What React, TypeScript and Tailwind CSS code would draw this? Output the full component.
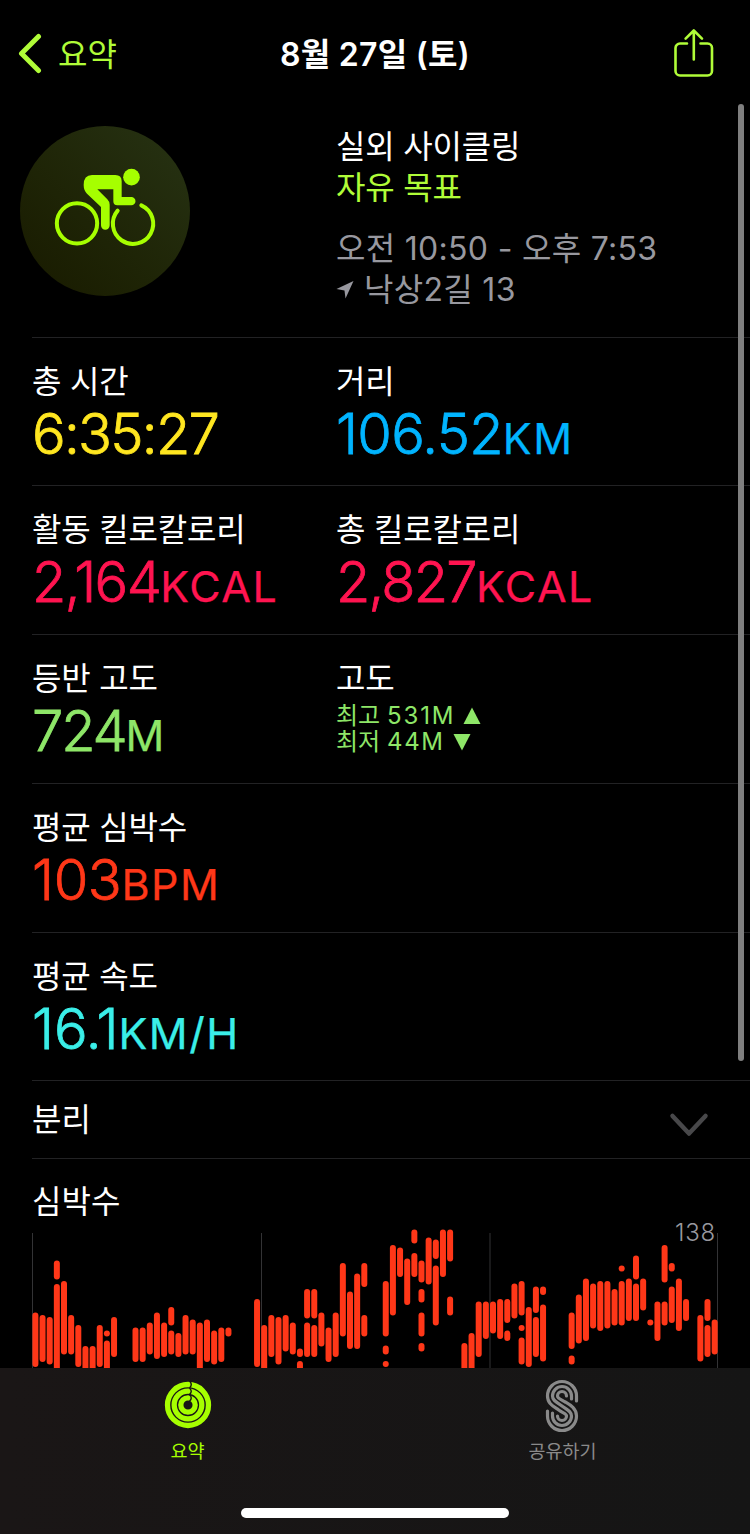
import type { ReactNode } from "react";
import clsx from "clsx";

// [slot, top, bottom] - one slot is a few minutes of the workout
const heartRate: [number, number, number][] = [
  [0, 92.5, 147], [1, 95, 142], [2, 97, 144.5], [3, 40.5, 59.5], [3, 64, 160],
  [4, 61, 134.5], [5, 95, 134.5], [6, 105, 147], [7, 126, 160], [8, 126, 160],
  [9, 105, 147], [10, 110.5, 116.5], [10, 120.5, 160], [11, 97, 137],
  [14, 107.5, 142], [15, 107.5, 142], [16, 102.5, 134.5], [17, 92.5, 139],
  [18, 102.5, 137], [19, 87, 105.5], [19, 110.5, 134.5], [20, 113, 137],
  [21, 95, 134.5], [22, 99.5, 134.5], [23, 102.5, 160], [24, 99.5, 142],
  [25, 110.5, 144.5], [26, 107.5, 142], [27, 107.5, 116.5],
  [31, 79, 147], [32, 105, 160], [33, 95, 137], [34, 97, 144.5],
  [35, 95, 131.5], [36, 102.5, 134.5], [37, 128.5, 137], [37, 141, 160],
  [38, 69, 98.5], [38, 102.5, 137], [39, 69, 98.5], [39, 105, 137],
  [40, 92.5, 126.5], [41, 107.5, 142], [42, 92.5, 137], [43, 43, 116.5],
  [44, 71.5, 129], [45, 53.5, 129], [46, 43, 67], [46, 95, 116.5],
  [49, 61, 116.5], [49, 125.5, 134.5], [49, 141, 147], [50, 25, 95.5],
  [51, 27.5, 57], [52, 38.5, 85], [53, 9.5, 23.5], [53, 33, 57],
  [54, 40.5, 62.5], [54, 69, 82.5], [54, 92.5, 116.5], [54, 123, 131.5],
  [55, 17.5, 64.5], [56, 19.5, 39], [56, 45.5, 105.5], [57, 9.5, 57],
  [58, 9.5, 41.5], [58, 76.5, 95.5],
  [60, 123, 160], [61, 113, 160], [62, 81.5, 137], [63, 81.5, 119],
  [64, 81.5, 113.5], [65, 79, 119], [66, 79, 103], [66, 110.5, 121],
  [67, 63.5, 98.5], [68, 61, 95.5], [68, 105, 111], [68, 117.5, 144.5],
  [69, 87, 147], [70, 66.5, 93], [70, 97, 137], [71, 66.5, 75], [71, 84.5, 141.5],
  [75, 92.5, 129], [75, 135.5, 144.5], [76, 74.5, 123.5], [77, 58.5, 121],
  [78, 63.5, 108.5], [79, 61, 111], [80, 61, 108.5], [81, 69, 105.5],
  [82, 45.5, 51.5], [82, 61, 105.5], [83, 58.5, 101], [84, 35.5, 59.5],
  [84, 63.5, 101], [85, 58.5, 90.5], [86, 99.5, 105.5], [87, 81.5, 121],
  [88, 25, 62.5], [88, 81.5, 105.5], [89, 43, 51.5], [89, 66.5, 103],
  [90, 58.5, 111], [91, 79, 101],
  [93, 95, 141.5], [94, 79, 101], [94, 105, 137], [95, 99.5, 134.5],
];

const CyclingIcon = () => (
  <svg viewBox="30 48 510 510" className="h-[170px] w-[170px]" fill="none">
    <circle cx="201" cy="340" r="60.5" stroke="#a6ff00" strokeWidth="12" />
    <path
      d="M323 302A60.5 60.5 0 1 0 394 286"
      stroke="#a6ff00"
      strokeWidth="12"
      strokeLinecap="round"
    />
    <circle cx="364.5" cy="201.5" r="25" fill="#a6ff00" />
    <path
      fill="#a6ff00"
      d="M246 195H316Q335 195 335 214V261H364a12.5 12.5 0 0 1 0 25H322Q310 286 310 274V238H262L292 268Q299 275 299 284V346a13 13 0 0 1-26 0V291L231 251Q221 241 221 225Q221 195 246 195Z"
    />
  </svg>
);

const ShareIcon = () => (
  <svg
    viewBox="0 0 42 52"
    className="h-[52px] w-[42px]"
    fill="none"
    stroke="#b0fc38"
    strokeWidth="2.6"
    strokeLinecap="round"
    strokeLinejoin="round"
  >
    <path d="M14 16.500H7a4.500 4.500 0 0 0-4.500 4.500V44a4.500 4.500 0 0 0 4.500 4.500H34.500a4.500 4.500 0 0 0 4.500-4.500V21a4.500 4.500 0 0 0-4.500-4.500H27.500" />
    <path d="M20.800 32.500V3.500M12.600 11.700l8.200-8.200 8.200 8.200" />
  </svg>
);

const RingsIcon = () => (
  <svg viewBox="0 0 48 48" className="h-12 w-12" fill="none">
    <g stroke="#a6ff00" strokeWidth="5.3">
      <circle cx="24" cy="24" r="20.5" />
      <circle cx="24" cy="24" r="13.8" />
      <circle cx="24" cy="24" r="7.2" />
    </g>
    <g stroke="#161414" strokeWidth="1.4">
      <path d="M25.500 0q3.500 3.500 0 7M25.500 7q3.500 3.300 0 6.600M25.500 13.600q3.500 3.300 0 6.600" />
    </g>
  </svg>
);

const SharingIcon = () => (
  <svg
    viewBox="0 0 34 54"
    className="h-[54px] w-[34px]"
    fill="none"
    stroke="#8a8a8a"
    strokeWidth="3.2"
    strokeLinecap="round"
  >
    <path d="M31.500 22V17A14.500 14.500 0 0 0 2.500 17C2.500 25 9 27.500 13.700 31S21.500 34.500 21.500 37A4.500 4.500 0 0 1 12.500 37" />
    <path d="M26.500 20V17A9.500 9.500 0 0 0 7.500 17C7.500 22 12.500 23.500 17 27S26.500 32 26.500 37A9.500 9.500 0 0 1 7.500 37V34" />
    <path d="M21.500 17A4.500 4.500 0 0 0 12.500 17C12.500 19.500 16 20.500 20.300 23S31.500 29 31.500 37A14.500 14.500 0 0 1 2.500 37V32" />
  </svg>
);

type MetricProps = {
  label: string;
  value?: string;
  unit?: string;
  className?: string;
  children?: ReactNode;
};

const Metric = ({ label, value, unit, className, children }: MetricProps) => (
  <div className="w-[304px] shrink-0 whitespace-nowrap pt-[24px]">
    <div className="h-[38px] text-[32px] leading-10 tracking-[-0.2px]">{label}</div>
    {value ? (
      <div
        className={clsx(
          "h-[68px] text-[56px] font-light leading-[68px] [-webkit-text-stroke:0.8px_currentColor]",
          className
        )}
      >
        {value}
        <span className="text-[43px] font-normal tracking-[1.5px] [-webkit-text-stroke:0.25px_currentColor]">
          {unit}
        </span>
      </div>
    ) : null}
    {children}
  </div>
);

const Row = ({ children }: { children: ReactNode }) => (
  <div className="ml-8 flex h-[148.8px] border-t border-[#222224]">{children}</div>
);

const App = () => {
  return (
    <div className="relative flex h-[1534px] w-[750px] flex-col overflow-hidden bg-black font-[Inter,'Noto_Sans_CJK_KR',sans-serif] text-white">
      <header className="flex h-[104px] shrink-0 items-center justify-between pl-[17px] pr-[35px]">
        <div className="flex w-[200px] items-center gap-[15px] text-[#b0fc38]">
          <svg viewBox="0 0 26 42" className="mt-[2px] h-[42px] w-[26px]" fill="none">
            <path
              d="M21.500 4.500L4.500 21.500L21.500 38.500"
              stroke="#b0fc38"
              strokeWidth="5"
              strokeLinecap="round"
              strokeLinejoin="round"
            />
          </svg>
          <span className="pt-[5px] text-[32px] leading-10">요약</span>
        </div>
        <h1 className="whitespace-nowrap pt-[5px] text-[32px] font-semibold leading-10 tracking-[0.3px]">
          8월 27일 (토)
        </h1>
        <div className="flex w-[182px] justify-end pt-[2px]">
          <ShareIcon />
        </div>
      </header>

      <section className="flex h-[232.5px] shrink-0 pl-5 pt-[22px]">
        <div className="flex h-[170px] w-[170px] items-center justify-center rounded-full bg-linear-to-tr from-[#181a00] to-[#273314]">
          <CyclingIcon />
        </div>
        <div className="ml-[146px] whitespace-nowrap text-[32px] leading-[41px] tracking-[-0.2px]">
          <div>실외 사이클링</div>
          <div className="text-[#b0fc38]">자유 목표</div>
          <div className="mt-5 tracking-[0.3px] text-[#98989f]">오전 10:50 - 오후 7:53</div>
          <div className="flex items-center tracking-[0.3px] text-[#98989f]">
            <svg viewBox="0 0 18 18" className="mr-[10px] h-[18px] w-[18px]">
              <path d="M17.500 0L9.500 17.500L8.500 9.500L.5 8Z" fill="#98989f" />
            </svg>
            낙상2길 13
          </div>
        </div>
      </section>

      <main className="flex min-h-0 flex-1 flex-col *:shrink-0">
        <Row>
          <Metric label="총 시간" value="6:35:27" className="tracking-[-1.7px] text-[#ffe620]" />
          <Metric label="거리" value="106.52" unit="KM" className="tracking-[-0.7px] text-[#00b4ff]" />
        </Row>
        <Row>
          <Metric label="활동 킬로칼로리" value="2,164" unit="KCAL" className="tracking-[-1.6px] text-[#ff1450]" />
          <Metric label="총 킬로칼로리" value="2,827" unit="KCAL" className="tracking-[-1.8px] text-[#ff1450]" />
        </Row>
        <Row>
          <Metric label="등반 고도" value="724" unit="M" className="tracking-[-2.2px] text-[#8ee668]" />
          <Metric label="고도">
            <div className="pt-[6px] text-[24px] leading-[26px] text-[#8ee668]">
              <div className="flex h-[26px] items-center gap-2">
                <span>
                  최고 <span className="tracking-[1.9px]">531M</span>
                </span>
                <svg viewBox="0 0 18 18" className="h-[18px] w-[18px]" fill="#8ee668">
                  <path d="M9 .5L17.500 17H.5Z" />
                </svg>
              </div>
              <div className="flex h-[26px] items-center gap-2">
                <span>
                  최저 <span className="tracking-[1.7px]">44M</span>
                </span>
                <svg viewBox="0 0 18 18" className="h-[18px] w-[18px]" fill="#8ee668">
                  <path d="M9 17.500L17.500 1H.5Z" />
                </svg>
              </div>
            </div>
          </Metric>
        </Row>
        <Row>
          <Metric label="평균 심박수" value="103" unit="BPM" className="tracking-[-0.4px] text-[#ff3718]" />
        </Row>
        <Row>
          <Metric label="평균 속도" value="16.1" unit="KM/H" className="tracking-[-0.1px] text-[#3aeee8]" />
        </Row>
        <div className="ml-8 flex h-[79px] items-center justify-between border-y border-[#222224] pr-[41px]">
          <span className="text-[32px] leading-10">분리</span>
          <svg viewBox="0 0 40 26" className="mt-[10px] h-[26px] w-10" fill="none">
            <path
              d="M3.500 4L20 21.500L36.500 4"
              stroke="#48484a"
              strokeWidth="4.5"
              strokeLinecap="round"
              strokeLinejoin="round"
            />
          </svg>
        </div>
        <div className="h-[60.5px] pl-8 pt-[23px] text-[32px] leading-10">심박수</div>
        <svg viewBox="0 -10 750 158" className="-mt-[10px] h-[158px] w-[750px]">
          {[32.5, 261.5, 490, 717.5].map((x) => (
            <path key={x} d={`M${x} 13V148`} stroke="#333335" />
          ))}
          {heartRate.map(([slot, top, bottom]) => (
            <rect
              key={`${slot}-${top}`}
              x={32.4 + slot * 7.15}
              y={top}
              width="6"
              height={bottom - top}
              rx="3"
              fill="#ff3718"
            />
          ))}
          <text x="716" y="21" textAnchor="end" fontSize="24" fontWeight="300" letterSpacing="0.8" fill="#98989f">
            138
          </text>
        </svg>
      </main>

      <footer className="flex h-[166px] shrink-0 flex-col bg-linear-to-r from-[#1a1616] to-[#151515]">
        <div className="flex h-[140px] pt-[12px] text-[18.5px] leading-6">
          <div className="flex w-1/2 flex-col items-center text-[#a6ff00]">
            <div className="flex h-[59px] pt-[1px]">
              <RingsIcon />
            </div>
            요약
          </div>
          <div className="flex w-1/2 flex-col items-center text-[#8a8a8a]">
            <div className="-mt-[1px] mr-[1px] flex h-[60px]">
              <SharingIcon />
            </div>
            공유하기
          </div>
        </div>
        <div className="mx-auto h-[10px] w-[268px] rounded-full bg-white" />
      </footer>

      {/* scroll indicator */}
      <div className="absolute right-[6px] top-[104px] h-[957px] w-[6px] rounded-full bg-[#7f7f7f]" />
    </div>
  );
};

export default App;
